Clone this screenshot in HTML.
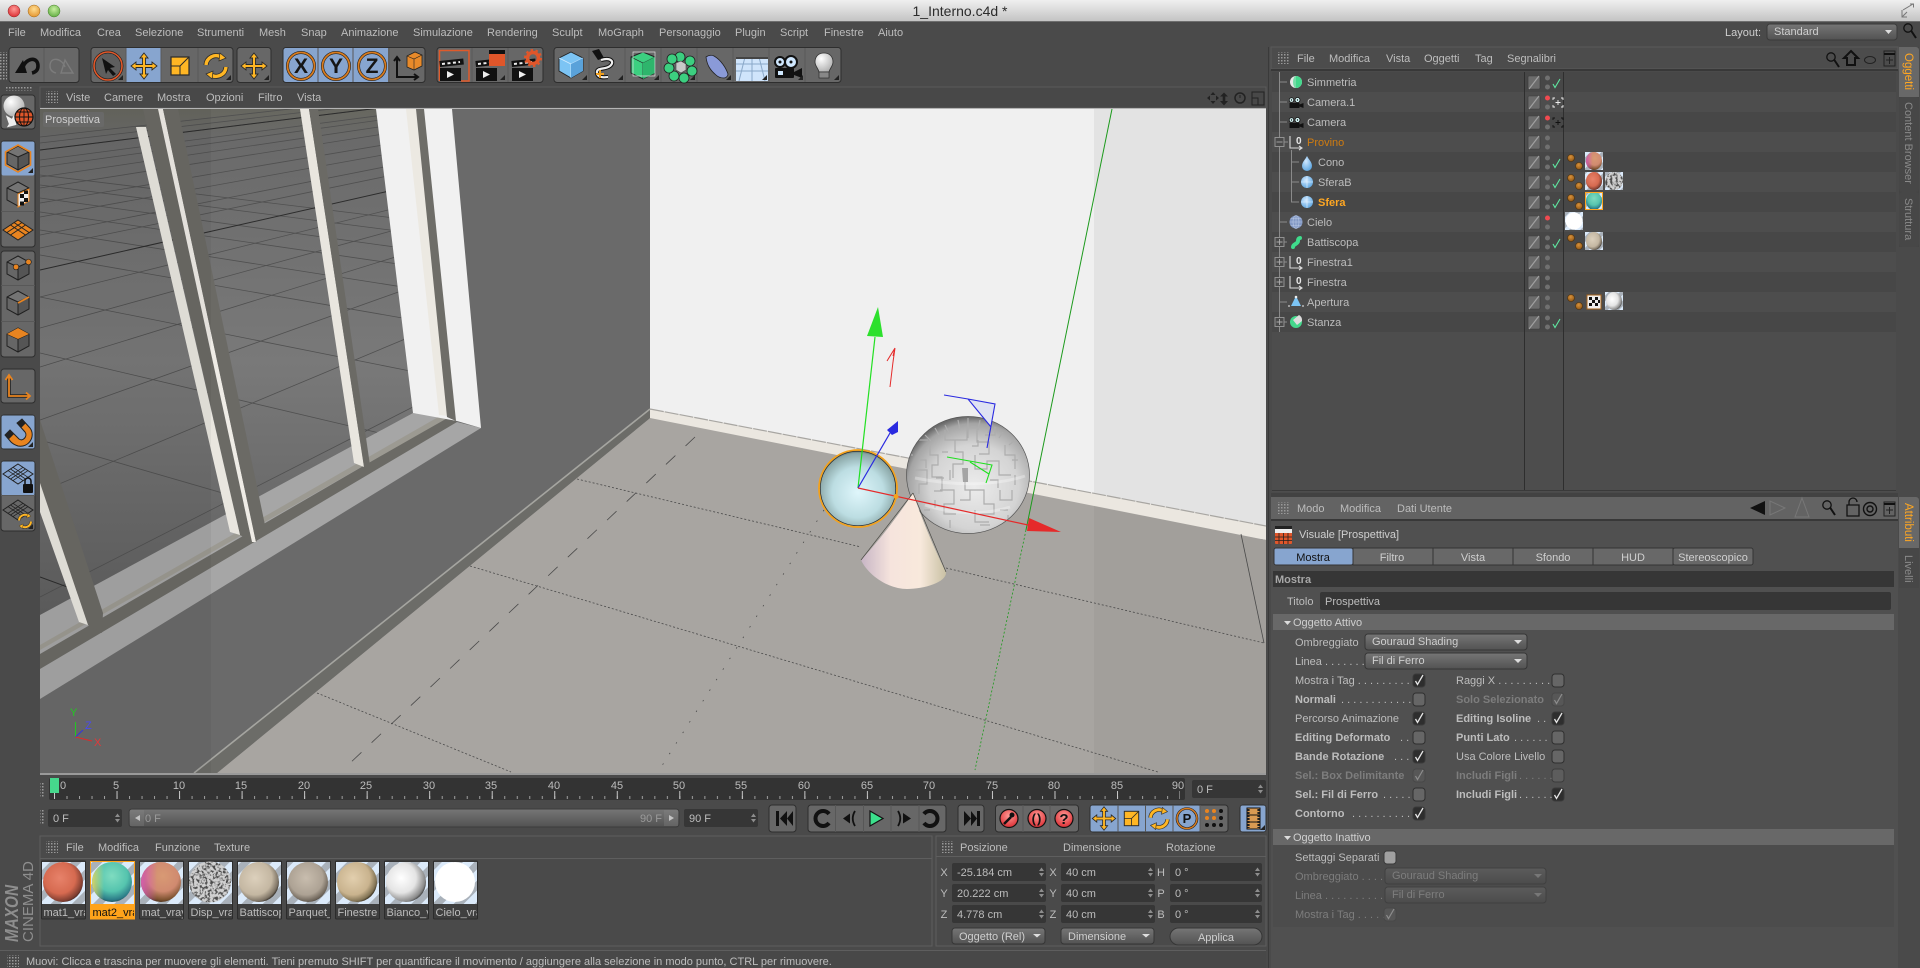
<!DOCTYPE html>
<html><head><meta charset="utf-8"><title>1_Interno.c4d</title>
<style>html,body{margin:0;padding:0;background:#4a4a4a;overflow:hidden}svg{display:block}
text{font-family:"Liberation Sans",sans-serif;font-size:11px;fill:#bdbdbd;white-space:pre}
.b{font-weight:bold}.d{fill:#7d7d7d}.h{fill:#cfcfcf}</style></head><body>
<svg xmlns="http://www.w3.org/2000/svg" width="1920" height="968" viewBox="0 0 1920 968">
<defs>
<linearGradient id="tb" x1="0" y1="0" x2="0" y2="1"><stop offset="0" stop-color="#efefef"/><stop offset="1" stop-color="#c4c4c4"/></linearGradient>
<linearGradient id="dd" x1="0" y1="0" x2="0" y2="1"><stop offset="0" stop-color="#767676"/><stop offset="1" stop-color="#525252"/></linearGradient>
<linearGradient id="ddd" x1="0" y1="0" x2="0" y2="1"><stop offset="0" stop-color="#5c5c5c"/><stop offset="1" stop-color="#4c4c4c"/></linearGradient>
<linearGradient id="gl" x1="0" y1="0" x2="0" y2="1"><stop offset="0" stop-color="#67675f"/><stop offset=".06" stop-color="#6a6a6a"/><stop offset=".5" stop-color="#797979"/><stop offset="1" stop-color="#5f5f5f"/></linearGradient>
<linearGradient id="cone" x1="0" y1="0" x2="1" y2="0"><stop offset="0" stop-color="#c7b5c5"/><stop offset=".35" stop-color="#f6e4dd"/><stop offset=".7" stop-color="#f8e9dc"/><stop offset="1" stop-color="#c9c1a4"/></linearGradient>
<radialGradient id="sa" cx=".5" cy=".55" r=".55"><stop offset="0" stop-color="#dff6fb"/><stop offset=".6" stop-color="#bcdde2"/><stop offset=".92" stop-color="#8aa6a6"/><stop offset="1" stop-color="#54625f"/></radialGradient>
<radialGradient id="sb" cx=".55" cy=".6" r=".6"><stop offset="0" stop-color="#ececec"/><stop offset=".6" stop-color="#d4d4d4"/><stop offset=".9" stop-color="#a4a4a4"/><stop offset="1" stop-color="#6a6a6a"/></radialGradient>
<radialGradient id="m1" cx=".42" cy=".4" r=".65"><stop offset="0" stop-color="#e7826a"/><stop offset=".6" stop-color="#d66a50"/><stop offset=".9" stop-color="#7d3d30"/><stop offset="1" stop-color="#2a1a18"/></radialGradient>
<radialGradient id="m2" cx=".5" cy=".35" r=".7"><stop offset="0" stop-color="#7fdcc0"/><stop offset=".55" stop-color="#55c4ae"/><stop offset=".85" stop-color="#2c7c88"/><stop offset="1" stop-color="#18303a"/></radialGradient>
<linearGradient id="m2b" x1="0" y1="0" x2="1" y2="0"><stop offset="0" stop-color="#d9d86a"/><stop offset=".3" stop-color="#d9d86a" stop-opacity="0"/></linearGradient>
<radialGradient id="m3" cx=".55" cy=".35" r=".7"><stop offset="0" stop-color="#d89a74"/><stop offset=".55" stop-color="#d08a70"/><stop offset=".85" stop-color="#7d5230"/><stop offset="1" stop-color="#2a1e14"/></radialGradient>
<linearGradient id="m3b" x1="0" y1="0" x2="1" y2="0"><stop offset="0" stop-color="#d860b0"/><stop offset=".4" stop-color="#d860b0" stop-opacity="0"/></linearGradient>
<radialGradient id="m5" cx=".4" cy=".4" r=".65"><stop offset="0" stop-color="#dcd0bc"/><stop offset=".65" stop-color="#c4b7a2"/><stop offset=".9" stop-color="#7c7264"/><stop offset="1" stop-color="#231f1a"/></radialGradient>
<radialGradient id="m6" cx=".45" cy=".4" r=".65"><stop offset="0" stop-color="#c8bdae"/><stop offset=".65" stop-color="#ada294"/><stop offset=".9" stop-color="#6c6358"/><stop offset="1" stop-color="#211d18"/></radialGradient>
<radialGradient id="m7" cx=".4" cy=".4" r=".65"><stop offset="0" stop-color="#e2cfae"/><stop offset=".65" stop-color="#c9b38e"/><stop offset=".9" stop-color="#807254"/><stop offset="1" stop-color="#251f14"/></radialGradient>
<radialGradient id="m8" cx=".38" cy=".4" r=".68"><stop offset="0" stop-color="#fff"/><stop offset=".55" stop-color="#e4e4e4"/><stop offset=".88" stop-color="#888"/><stop offset="1" stop-color="#1e1e1e"/></radialGradient>
<radialGradient id="bl" cx=".4" cy=".35" r=".7"><stop offset="0" stop-color="#d0e8ff"/><stop offset="1" stop-color="#5ea6e0"/></radialGradient>
<radialGradient id="wh" cx=".35" cy=".3" r=".8"><stop offset="0" stop-color="#fff"/><stop offset="1" stop-color="#aaa"/></radialGradient>
<radialGradient id="red" cx=".5" cy=".35" r=".7"><stop offset="0" stop-color="#ff9a96"/><stop offset="1" stop-color="#d9262c"/></radialGradient>
<radialGradient id="org" cx=".5" cy=".35" r=".7"><stop offset="0" stop-color="#ffdd90"/><stop offset="1" stop-color="#e2902a"/></radialGradient>
<radialGradient id="brn" cx=".45" cy=".35" r=".7"><stop offset="0" stop-color="#d8923c"/><stop offset="1" stop-color="#8a5212"/></radialGradient>
<radialGradient id="grn" cx=".5" cy=".35" r=".7"><stop offset="0" stop-color="#c8f0a0"/><stop offset="1" stop-color="#5aa83c"/></radialGradient>
<pattern id="dots" width="3" height="3" patternUnits="userSpaceOnUse"><rect width="1.5" height="1.5" fill="#9a9a9a"/></pattern>
<pattern id="stripe" width="15" height="15" patternUnits="userSpaceOnUse" patternTransform="rotate(45)"><rect width="15" height="15" fill="#dbeafa"/><rect width="7" height="15" fill="#a9b1ba"/></pattern>
<pattern id="stripeS" width="8" height="8" patternUnits="userSpaceOnUse" patternTransform="rotate(45)"><rect width="8" height="8" fill="#dbeafa"/><rect width="4" height="8" fill="#a9b1ba"/></pattern>
<pattern id="tk" x="54" y="0" width="12.507" height="10" patternUnits="userSpaceOnUse"><rect width="1" height="10" fill="#a0a0a0"/></pattern>
<pattern id="tM" x="54" y="0" width="62.53" height="10" patternUnits="userSpaceOnUse"><rect width="1" height="10" fill="#c8c8c8"/></pattern>
<filter id="noise" x="0" y="0" width="100%" height="100%" color-interpolation-filters="sRGB"><feTurbulence type="fractalNoise" baseFrequency=".38" numOctaves="2" seed="4"/><feColorMatrix values="0 0 0 0 .3 0 0 0 0 .3 0 0 0 0 .3 5 0 0 0 -2.300"/></filter>
<clipPath id="glass"><path d="M40 109H376L413 413 40 615Z"/></clipPath>
<clipPath id="sbc"><ellipse cx="968" cy="475" rx="61" ry="58"/></clipPath>
<clipPath id="dc1"><ellipse cx="210" cy="882" rx="21" ry="20.500"/></clipPath>
<clipPath id="dc2"><ellipse cx="1614" cy="181" rx="9" ry="9"/></clipPath>
<g id="move"><path d="M0-13L4-8H1.5V-1.5H8V-4L13 0 8 4V1.5H1.5V8H4L0 13-4 8H-1.5V1.5H-8V4L-13 0-8-4V-1.5H-1.5V-8H-4Z" fill="#ffb624" stroke="#2a2a2a" stroke-width=".9"/></g>
<g id="rot"><g fill="none" stroke-linecap="butt"><path d="M-10-1A10 10 0 0 1 5-9M10 1A10 10 0 0 1-5 9" stroke="#2a2a2a" stroke-width="5"/><path d="M-10-1A10 10 0 0 1 5-9M10 1A10 10 0 0 1-5 9" stroke="#ffb624" stroke-width="3.4"/></g><path d="M4-13L10-8 3-5ZM-4 13L-10 8-3 5Z" fill="#ffb624" stroke="#2a2a2a" stroke-width=".7"/></g>
<g id="scale"><rect x="-9" y="-9" width="18" height="18" fill="#ffb624" stroke="#2a2a2a" stroke-width="1.2"/><path d="M-9 0H0V9M0 0L9-9" fill="none" stroke="#2a2a2a" stroke-width="1"/></g>
<path id="tri" d="M0 0H-5L0-5Z" fill="#222"/>
<g id="gridd" fill="none"><path d="M0-10L15 0 0 10-15 0Z" stroke="#222" stroke-width="1"/><path d="M-10-3.4L5 6.6M-5-6.7L10 3.3M10-3.4L-5 6.6M5-6.7L-10 3.3M-7.5-5L7.5 5M7.5-5L-7.5 5" stroke="#222" stroke-width=".8"/></g>
<g id="cube"><path d="M0-12L11-6V6L0 12-11 6V-6Z" fill="#666"/><path d="M0-1L11-6V6L0 12Z" fill="#555"/><path d="M0-12L11-6 0-1-11-6Z" fill="#747474"/><path d="M0-12L11-6V6L0 12-11 6V-6ZM0-1L11-6M0-1L-11-6M0-1V12" fill="none" stroke="#202020" stroke-width="1"/></g>
<g id="clap"><rect x="0" y="8" width="21" height="13" fill="#111"/><rect x="0" y="1" width="24" height="6" fill="#111" transform="rotate(-6 0 7)"/><path d="M2 4l18-2" stroke="#eee" stroke-width="2" stroke-dasharray="3 2.5"/><path d="M7 11l7 3.5-7 3.5Z" fill="#eee"/></g>
<g id="sl"><rect x="0" y="0" width="12" height="13" rx="1" fill="#6c6c6c" stroke="#3a3a3a" stroke-width=".6"/><path d="M1 13L11 0" stroke="#a0a0a0" stroke-width="1.2"/></g>
<circle id="dd1" r="2.500" fill="#707070"/>
<path id="chk" d="M0 0l2 3.5L7-5" fill="none" stroke="#5fe6a0" stroke-width="1.1"/>
<g id="tag"><circle cx="-4" cy="-4" r="3.500" fill="url(#brn)" stroke="#4e2f0a" stroke-width=".6"/><circle cx="4" cy="4" r="3.500" fill="url(#brn)" stroke="#4e2f0a" stroke-width=".6"/></g>
<g id="cb0"><rect x="0" y="-6" width="12" height="13" rx="3" fill="#666" stroke="#2f2f2f"/></g>
<g id="cb1"><rect x="0" y="-6" width="12" height="13" rx="3" fill="#2e2e2e" stroke="#3a3a3a"/><path d="M2.5 1l2 3.5L10-5" fill="none" stroke="#e6e6e6" stroke-width="1.3"/></g>
<g id="cbd"><rect x="0" y="-6" width="12" height="13" rx="3" fill="#575757" stroke="#484848"/><path d="M2.5 1l2 3.5L10-5" fill="none" stroke="#8d8d8d" stroke-width="1.2"/></g>
<path id="spin" d="M0 -1L2.5-4.5 5-1ZM0 1L2.5 4.5 5 1Z" fill="#8e8e8e"/>
<path id="null" d="M0-6V6H11M9 4l3 2-3 2" fill="none" stroke="#d8d8d8" stroke-width="1.1"/>
<g id="plus"><rect x="-4.5" y="-4.5" width="9" height="9" fill="#4a4a4a" stroke="#999" stroke-width=".9"/><path d="M-3 0H3M0-3V3" stroke="#aaa" stroke-width=".9"/></g>
<g id="minus"><rect x="-4.5" y="-4.5" width="9" height="9" fill="#4a4a4a" stroke="#999" stroke-width=".9"/><path d="M-3 0H3" stroke="#aaa" stroke-width=".9"/></g>
<g id="ms"><circle cx="-2" cy="-3" r="4.2" fill="none" stroke="#111" stroke-width="1.3"/><path d="M1-.5L6 7" stroke="#111" stroke-width="2"/></g>
<g id="camS"><circle cx="-9" cy="-6" r="4.500" fill="#dff" stroke="#111" stroke-width="1.600"/><circle cx="3" cy="-6" r="5" fill="#dff" stroke="#111" stroke-width="1.600"/><circle cx="-9" cy="-6" r="1.400" fill="#111"/><circle cx="3" cy="-6" r="1.400" fill="#111"/><rect x="-13" y="0" width="20" height="10" fill="#111"/><path d="M7 3l8-3v10l-8-3Z" fill="#111"/></g>
</defs>

<rect width="1920" height="968" fill="#4a4a4a"/>
<!-- title -->
<rect width="1920" height="21" fill="url(#tb)"/><rect y="21" width="1920" height="1" fill="#6e6e6e"/>
<circle cx="14" cy="11" r="6" fill="url(#red)" stroke="#8e2c2c" stroke-width=".5"/><circle cx="34" cy="11" r="6" fill="url(#org)" stroke="#a06a20" stroke-width=".5"/><circle cx="54" cy="11" r="6" fill="url(#grn)" stroke="#4a8030" stroke-width=".5"/>
<text x="960" y="16" text-anchor="middle" style="font-size:14px;fill:#2c2c2c">1_Interno.c4d *</text>
<path d="M1903 10l10-6m-3-0h3.5v3.5M1902 10v7h5M1902 17l5-5" fill="none" stroke="#777" stroke-width="1"/>
<!-- menu -->
<g>
<text x="8" y="36">File</text><text x="40" y="36">Modifica</text><text x="97" y="36">Crea</text><text x="135" y="36">Selezione</text><text x="197" y="36">Strumenti</text><text x="259" y="36">Mesh</text><text x="301" y="36">Snap</text><text x="341" y="36">Animazione</text><text x="413" y="36">Simulazione</text><text x="487" y="36">Rendering</text><text x="552" y="36">Sculpt</text><text x="598" y="36">MoGraph</text><text x="659" y="36">Personaggio</text><text x="735" y="36">Plugin</text><text x="780" y="36">Script</text><text x="824" y="36">Finestre</text><text x="878" y="36">Aiuto</text>
<text x="1725" y="36" class="h">Layout:</text>
<rect x="1767" y="24" width="130" height="16" rx="3" fill="url(#dd)" stroke="#3a3a3a"/><text x="1774" y="35" class="h">Standard</text><path d="M1885 30h7l-3.500 4Z" fill="#ddd"/>
<use href="#ms" x="1910" y="36" transform="translate(0 -5)"/>
</g>
<!-- toolbar grip -->
<rect x="0" y="52" width="7" height="28" fill="url(#dots)"/>
<!-- toolbar groups -->
<g stroke="#2e2e2e" fill="#676767">
<rect x="9" y="47.500" width="70" height="35" rx="3"/><rect x="91" y="47.500" width="142" height="35" rx="3"/><rect x="237" y="47.500" width="34" height="35" rx="3"/><rect x="283" y="47.500" width="142" height="35" rx="3"/><rect x="437" y="47.500" width="106" height="35" rx="3"/><rect x="554" y="47.500" width="287" height="35" rx="3"/>
</g>
<g fill="#87a5cf"><rect x="126" y="48" width="35" height="34"/><path d="M286 48h102v34h-102a2.500 2.500 0 0 1-2.500-2.500v-29a2.500 2.500 0 0 1 2.500-2.500Z"/></g>
<path d="M44 48v34M126 48v34M161 48v34M198 48v34M318 48v34M353 48v34M389 48v34M472 48v34M508 48v34M589 48v34M625 48v34M661 48v34M697 48v34M733 48v34M769 48v34M805 48v34" stroke="#585858" fill="none"/>
<path d="M15 73L27 73 23 60Z" fill="#111"/><path d="M23 67C26 58 38 56 38 66 38 70 36 72 32 73" fill="none" stroke="#111" stroke-width="3.600"/>
<path d="M73 73L61 73 65 60ZM65 67C62 58 50 56 50 66 50 70 52 72 56 73" fill="none" stroke="#7c7c7c" stroke-width="1.400"/>
<!-- cursor -->
<circle cx="108" cy="66" r="14" fill="#5e5e5e" stroke="#1c1c1c" stroke-width="2.800"/><circle cx="108" cy="66" r="14" fill="none" stroke="#e2582a" stroke-width="1.600"/>
<path d="M102 58L115 67 110 68 116 74 113 76 108 70 106 74Z" fill="#111"/>
<use href="#move" x="144" y="66"/><use href="#scale" x="180" y="66"/><use href="#rot" x="216" y="66"/><use href="#move" x="254" y="66"/>
<use href="#tri" x="123" y="80"/><use href="#tri" x="231" y="80"/><use href="#tri" x="269" y="80"/>
<g fill="none"><circle cx="301" cy="66" r="13.500" stroke="#202020" stroke-width="3"/><circle cx="301" cy="66" r="13.500" stroke="#d97c1e" stroke-width="1.800"/><circle cx="336" cy="66" r="13.500" stroke="#202020" stroke-width="3"/><circle cx="336" cy="66" r="13.500" stroke="#d97c1e" stroke-width="1.800"/><circle cx="372" cy="66" r="13.500" stroke="#202020" stroke-width="3"/><circle cx="372" cy="66" r="13.500" stroke="#d97c1e" stroke-width="1.800"/></g>
<text x="301" y="73" text-anchor="middle" class="b" style="font-size:21px;fill:#161616">X</text><text x="336" y="73" text-anchor="middle" class="b" style="font-size:21px;fill:#161616">Y</text><text x="372" y="73" text-anchor="middle" class="b" style="font-size:21px;fill:#161616">Z</text>
<path d="M397 58V77H417M394 61l3-4 3 4M414 74l4 3-4 3" fill="none" stroke="#111" stroke-width="2"/>
<path d="M407 56l8-4 7 3v11l-8 4-7-3Z" fill="#e88a2a" stroke="#222" stroke-width=".8"/><path d="M407 56l7 3 8-4M414 59v11" fill="none" stroke="#222" stroke-width=".6"/>
<!-- render -->
<path d="M439.500 81V50.500H469V81H461" fill="none" stroke="#e05a2a" stroke-width="1.500"/><use href="#clap" x="440" y="60"/>
<use href="#clap" x="476" y="60"/><rect x="489" y="50" width="16" height="16" fill="#e0562a"/><rect x="489" y="50" width="16" height="4" fill="#111"/><use href="#tri" x="505" y="80"/>
<use href="#clap" x="512" y="60"/><circle cx="533" cy="58" r="5.500" fill="none" stroke="#e0562a" stroke-width="3.500"/><circle cx="533" cy="58" r="8" fill="none" stroke="#e0562a" stroke-width="2" stroke-dasharray="2.500 2.500"/>
<!-- objects -->
<path d="M571 52l12 6v13l-12 7-12-7V58Z" fill="#7cc4f4" stroke="#222" stroke-width=".9"/><path d="M559 58l12 6 12-6M571 64v14" fill="none" stroke="#cfeaff" stroke-width=".8"/><path d="M571 64l12-6v13l-12 7Z" fill="#5aa2da"/><use href="#tri" x="587" y="80"/>
<path d="M592 51l7-2 5 9-6 2Z" fill="#111"/><path d="M601 60c10-3 14 2 9 6s-14 1-13 7 10 4 11 4" fill="none" stroke="#111" stroke-width="4.200"/><path d="M601 60c10-3 14 2 9 6s-14 1-13 7 10 4 11 4" fill="none" stroke="#eee" stroke-width="2.200"/><path d="M596 74h8M600 70v8" stroke="#f0a020" stroke-width="2"/><use href="#tri" x="623" y="80"/>
<path d="M643 52l12 5v16l-12 6-12-6V57Z" fill="#3ccf80" stroke="#222"/><path d="M631 57l12 6 12-6M643 63v16" fill="none" stroke="#222" stroke-width=".6"/><path d="M643 63l12-6v16l-12 6Z" fill="#2eb56c"/><path d="M633 52h22v24h-22Z" fill="none" stroke="#ddd" stroke-width=".7"/><use href="#tri" x="659" y="80"/>
<g fill="#3ccf80" stroke="#222" stroke-width=".8"><circle cx="680" cy="57" r="5"/><circle cx="690" cy="61" r="5"/><circle cx="692" cy="71" r="5"/><circle cx="684" cy="78" r="5"/><circle cx="674" cy="76" r="5"/><circle cx="669" cy="68" r="5"/><circle cx="672" cy="59" r="5"/></g><path d="M676 63l5-2 5 3v6l-5 3-5-3Z" fill="#c8c8c8" stroke="#444" stroke-width=".6"/><use href="#tri" x="695" y="80"/>
<path d="M706 57c3-2 6-2 8-1 7 4 12 12 14 18 0 2-2 4-4 4-3 0-6-1-8-3-6-5-9-10-10-18Z" fill="#8a9ad8" stroke="#222" stroke-width=".8"/><use href="#tri" x="731" y="80"/>
<rect x="736" y="57" width="32" height="24" fill="#cfe4fb"/><path d="M736 64h32M736 71h32M752 57v24M745 57l-6 24M759 57l6 24" stroke="#8aa8c8" fill="none"/><rect x="736" y="57" width="32" height="2" fill="#444"/><use href="#tri" x="767" y="80"/>
<g><circle cx="780" cy="62" r="5" fill="#d0e8ff" stroke="#111" stroke-width="2"/><circle cx="791" cy="62" r="6" fill="#d0e8ff" stroke="#111" stroke-width="2"/><circle cx="780" cy="62" r="1.500" fill="#111"/><circle cx="791" cy="62" r="1.500" fill="#111"/><rect x="775" y="68" width="19" height="10" rx="1" fill="#111"/><rect x="778" y="71" width="5" height="4" fill="#d0e8ff"/><path d="M794 72l8-4v10l-8-3Z" fill="#111"/></g><use href="#tri" x="803" y="80"/>
<path d="M824 53c6 0 9 4 9 9 0 4-3 6-4 10h-10c-1-4-4-6-4-10 0-5 3-9 9-9Z" fill="url(#wh)" stroke="#333" stroke-width=".8"/><rect x="819" y="72" width="10" height="6" fill="#888" stroke="#222" stroke-width=".6"/><use href="#tri" x="839" y="80"/>

<!-- left toolbar -->
<rect x="6" y="87" width="26" height="3.500" fill="url(#dots)"/>
<g stroke="#2e2e2e" fill="#676767"><rect x="1" y="95" width="34" height="34" rx="3"/><rect x="1" y="141" width="34" height="106" rx="3"/><rect x="1" y="251" width="34" height="106" rx="3"/><rect x="1" y="369" width="34" height="34" rx="3"/><rect x="1" y="415" width="34" height="34" rx="3"/><rect x="1" y="461" width="34" height="70" rx="3"/></g>
<g fill="#87a5cf"><rect x="1.500" y="141.500" width="33" height="34" rx="2"/><rect x="1.500" y="415.500" width="33" height="33" rx="2"/><rect x="1.500" y="461.500" width="33" height="34" rx="2"/></g>
<path d="M1 211.500h34M1 285.500h34M1 321.500h34M1 495.500h34" stroke="#585858"/>
<!-- globe -->
<circle cx="14" cy="106" r="10.500" fill="url(#wh)"/><path d="M4 118l7 0 0-4 7 7-7 7 0-4Z" fill="#eee" transform="rotate(30 10 120)"/><circle cx="24" cy="117" r="9" fill="#e0562a" stroke="#111" stroke-width="1.200"/><path d="M15 117h18M24 108v18M17 112h14M17 122h14" stroke="#111" stroke-width=".9"/><ellipse cx="24" cy="117" rx="4.500" ry="9" fill="none" stroke="#111" stroke-width=".9"/>
<use href="#cube" x="18" y="158"/><path d="M18 145l12.500 7v13L18 172 5.500 165v-13Z" fill="none" stroke="#e88420" stroke-width="1.600"/><use href="#tri" x="33" y="173"/>
<use href="#cube" x="18" y="194"/><path d="M18 194l11-5v12l-11 6Z" fill="#eee" stroke="#e88420"/><path d="M20 194h4v4h-4ZM24 198h4v4h-4ZM24 190.500h4v3.500h-4ZM20 201.500h4v4h-4Z" fill="#111"/>
<path d="M18 220l15 10-15 10-15-10Z" fill="#e88420" stroke="#222"/><path d="M10.500 225l15 10M14 222.500l15 10M25.500 225l-15 10M22 222.500l-15 10" stroke="#222" fill="none"/>
<use href="#cube" x="18" y="268"/><circle cx="28.500" cy="262" r="2.800" fill="#e88420" stroke="#222" stroke-width=".7"/><circle cx="16" cy="267" r="2.800" fill="#e88420" stroke="#222" stroke-width=".7"/>
<use href="#cube" x="18" y="303"/><path d="M18 309l11-6" transform="translate(0 -6)" stroke="#e88420" stroke-width="1.800"/>
<use href="#cube" x="18" y="340"/><path d="M18 328l11 6-11 5-11-5Z" fill="#e88420"/>
<path d="M9 376v20h20" fill="none" stroke="#222" stroke-width="3.600"/><path d="M9 376v20h20M5.500 380l3.500-5 3.500 5M26 392.500l4 3.500-4 3.500" fill="none" stroke="#e88420" stroke-width="1.800"/>
<path d="M10 430l9 9c4 3 9-3 6-7l-8-9 5-4 8 9c6 8-1 20-12 18-3-1-5-2-7-4l-6-7Z" fill="#e88420" stroke="#222"/><path d="M5 435l5-5 4 4-5 5ZM17 423l5-4 4 4-5 5Z" fill="#222"/><use href="#tri" x="33" y="447"/>
<use href="#gridd" x="18" y="474"/><rect x="23" y="484" width="10" height="9" rx="1" fill="#111"/><path d="M25 484v-3a3 3 0 0 1 6 0v3" fill="none" stroke="#111" stroke-width="1.500"/>
<use href="#gridd" x="18" y="510"/><g transform="translate(25 521) scale(.6)"><use href="#rot"/></g><use href="#tri" x="33" y="529"/>

<!-- viewport header -->
<rect x="40" y="87" width="1226" height="21" fill="#484848" stroke="#5a5a5a"/>
<rect x="46" y="91" width="12" height="12" fill="url(#dots)"/>
<text x="66" y="101">Viste</text><text x="104" y="101">Camere</text><text x="157" y="101">Mostra</text><text x="206" y="101">Opzioni</text><text x="258" y="101">Filtro</text><text x="297" y="101">Vista</text>
<path d="M1207 98l3-2.500v5ZM1219 98l-3-2.500v5ZM1213 92l-2.500 3h5ZM1213 104l-2.500-3h5Z" fill="#222"/><path d="M1224 92.500l-4 4h2.700v4.500h-2.700l4 4.500 4-4.500h-2.700v-4.500h2.700Z" fill="#222"/><circle cx="1240" cy="98" r="5" fill="none" stroke="#222" stroke-width="1.500"/><path d="M1240 95v3" stroke="#222"/><path d="M1252 92h12v13h-12Zm0 6h6v7" fill="none" stroke="#222"/>
<rect x="40" y="108" width="1226" height="1" fill="#b4b4b4"/>

<!-- viewport art -->
<svg x="0" y="0" width="1920" height="968" viewBox="0 0 1920 968">
<rect x="40" y="109" width="1226" height="664" fill="#6a6a6a"/>
<rect x="650" y="109" width="616" height="430" fill="#f0f0f0"/><rect x="1094" y="109" width="172" height="430" fill="#e3e3e3"/>
<path d="M650 409L1266 526V540L650 419Z" fill="#ebe7e0"/><path d="M650 409L1266 526" stroke="#a8a6a2" stroke-width="1.200" stroke-dasharray="14 1"/>
<path d="M650 418L1266 540V773H217Z" fill="#a8a5a1"/><path d="M1094 505.500L1266 540V773H1094Z" fill="#000" opacity=".035"/>
<path d="M650 408V418L217 773H194Z" fill="#6c6c68"/><path d="M650 409L194 773" stroke="#a5a5a0" stroke-width="1.600"/>
<!-- glass -->
<path d="M40 109H376L413 413 40 615Z" fill="url(#gl)"/>
<g clip-path="url(#glass)" fill="none" stroke="#505050" stroke-width=".8">
<path d="M40 137L460 90M40 143L460 94M40 150L460 98M40 160L460 105M40 167L460 109M40 177L460 115M40 188L460 122M40 203L460 132M40 217L460 141M40 235L460 152M40 248L460 161M40 297L460 192M40 328L460 212M40 367L460 237M40 420L460 270M40 492L460 316M40 597L460 383"/>
<path d="M40 175L460 226M40 185L460 239M40 198L460 256M40 212L460 273M40 230L460 296M40 255L460 328M40 297L460 381M40 353L460 452M40 440L460 562"/>
<path d="M40 150L460 98M40 270L460 175M40 577L130 610" stroke="#2c2c2c" stroke-width="1"/>
</g>
<!-- sill -->
<path d="M413 413L450 417 40 655V615Z" fill="#a6a6a6"/>
<path d="M451 415L40 654V669L456 423 458 415Z" fill="#6b6a65"/><path d="M440 416L451 416 40 650 40 645Z" fill="#9c9a92"/>
<path d="M457 422L481 428 40 699V669Z" fill="#a6a6a6"/>
<!-- jamb -->
<path d="M376 109H452L481 428 457 421 413 413Z" fill="#f1f1f1"/>
<path d="M406 109H417L448 416 439 415Z" fill="#ece9e2"/><path d="M416 109H424L456 421 447 417Z" fill="#6e6d68"/>
<!-- mullions -->
<path d="M300 109H309L364 467 354 463Z" fill="#e9e6df"/><path d="M309 109H318L371 472 364 467Z" fill="#6b6a65"/>
<path d="M143 109H158L252 542 240 535Z" fill="#6b6a65"/><path d="M136 127H146L240 535 230 532Z" fill="#e9e6df"/><path d="M158 109H163L256 542 252 542Z" fill="#efece6"/><path d="M163 109H178L265 525 256 542Z" fill="#6b6a65"/>
<path d="M40 420L103 613 102 633 88 625 40 483Z" fill="#6b6a65"/><path d="M40 483L88 625 79 622 40 512Z" fill="#e9e6df"/>
<rect x="40" y="109" width="171" height="664" fill="#000" opacity=".045"/>
<!-- floor lines -->
<g fill="none" stroke="#4a4a4a" stroke-width=".8"><path d="M577 479L861 547M946 568L1264 643M470 566L1158 772M317 693L511 772" stroke-dasharray="2 2"/><path d="M695 437L348 765" stroke-dasharray="13 14"/><path d="M824 510L658 772" stroke-dasharray="1.500 11"/><path d="M1241 534L1264 643"/></g>
<path d="M1112 109L1026 530" stroke="#1c9a1c" stroke-width="1"/><path d="M1026 530L975 770" stroke="#1c9a1c" stroke-dasharray="2 2" stroke-width=".8" fill="none"/>
<!-- sphere B -->
<ellipse cx="968" cy="475" rx="61.500" ry="58.500" fill="url(#sb)"/>
<g clip-path="url(#sbc)" fill="none" stroke="#adadad" stroke-width="1.200">
<path d="M930 445v10h8v10h-6v12h10v14h-8M945 430v10h10v12h8v12h-10v14M955 440h12v-12h10v14h12v12h-10M975 455v14h12v-8h12v14h12M985 435h10v-8M1005 445v10h10v14M915 470h12v14h-8v10M940 490h14v14h-10v10h12M960 500h10v-10h14v14h10v10h-14M975 510v12h14M1000 490v10h12v-10M1015 475v10M930 510h-6M950 520v8M990 525h-10M905 455h8M918 440h10M1008 515v6M920 460h6v8M936 478h8M965 482v8h6M990 480h8v8M1012 460h6M948 452h-6M950 470v10M978 440v6h-6M935 500v8M1000 510h8"/>
<path d="M968 418v20M945 425l4 8M992 425l-4 8M925 435l6 6M1015 440l-6 5M958 420l2 10M980 420l-2 10M935 428l4 7M1003 432l-4 6"/>
<path d="M962 468h6v14h-5Z" fill="#a4a4a4" stroke="none"/><path d="M915 478c40 8 80 8 110-2M925 505c30 10 60 10 85 2" stroke="#fff" stroke-width="3" opacity=".3"/>
</g>
<ellipse cx="968" cy="475" rx="61.500" ry="58.500" fill="none" stroke="#555" stroke-width=".7"/>
<!-- cam blue -->
<path d="M968 399L995 404 991 427Z" fill="#dfe2f2"/><path d="M944 395L968 399 995 404 987 448M968 399L991 427" fill="none" stroke="#2a2ae0" stroke-width="1.100"/>
<path d="M947 457L992 465 986 483M970 462L989 474" fill="none" stroke="#1ee01e" stroke-width="1.100"/>
<!-- sphere A -->
<ellipse cx="858" cy="488.500" rx="39" ry="38.500" fill="url(#sa)" stroke="#f4a21c" stroke-width="1.800"/><ellipse cx="858" cy="488.500" rx="37.700" ry="37.200" fill="none" stroke="#2a2a2a" stroke-width=".7"/>
<!-- cone -->
<path d="M913 493C922 520 937 555 946 572 947 582 925 589 907 589 888 589 868 575 861 560 880 540 900 513 913 493Z" fill="url(#cone)"/><path d="M913 493L946 572M913 493L861 560" stroke="#4a4a44" stroke-width=".7"/>
<!-- axes -->
<path d="M858 488L875 337" stroke="#22e022" stroke-width="1.200"/><path d="M878 307L867 336 883 337Z" fill="#2de02d"/>
<path d="M858 488L890 433" stroke="#2a2ae0" stroke-width="1.200"/><path d="M898 421L887 430 892 435 898 432Z" fill="#2a2ae0"/>
<path d="M858 488L1028 525" stroke="#e52a2a" stroke-width="1.200"/><path d="M1029 518L1061 532 1027 531Z" fill="#e52a2a"/><circle cx="896" cy="496.500" r="2.500" fill="#f4a21c"/>
<path d="M890 387L893 362M895 348L887 361M895 348L893 362M895 348L893 356" fill="none" stroke="#e52a2a" stroke-width="1"/>
<!-- gizmo -->
<path d="M75.500 737V722" stroke="#22c822"/><path d="M75.500 737L83 730" stroke="#3434e0"/><path d="M75.500 737L92 741" stroke="#e02a2a"/>
<text x="70" y="716" style="font-size:11px;fill:#22c822">Y</text><text x="85" y="729" style="font-size:11px;fill:#4a4aee">Z</text><text x="94" y="746" style="font-size:11px;fill:#e03a3a">X</text>
<rect x="43" y="112" width="61" height="15" rx="2" fill="#6a6a6a" opacity=".85"/><text x="45" y="123" class="h">Prospettiva</text>
</svg>
<rect x="40" y="773" width="1226" height="2" fill="#9a9a9a"/>

<!-- timeline -->
<rect x="40" y="783" width="5" height="15" fill="url(#dots)"/><rect x="40" y="809" width="5" height="16" fill="url(#dots)"/>
<rect x="49" y="778" width="1136" height="22" rx="2" fill="#333"/>
<rect x="54" y="796" width="1126" height="3" fill="url(#tk)"/><rect x="54" y="791" width="1126" height="8" fill="url(#tM)"/>
<rect x="50" y="778" width="9" height="15" fill="#46d78c"/>
<g text-anchor="middle"><text x="63" y="789">0</text><text x="116" y="789">5</text><text x="179" y="789">10</text><text x="241" y="789">15</text><text x="304" y="789">20</text><text x="366" y="789">25</text><text x="429" y="789">30</text><text x="491" y="789">35</text><text x="554" y="789">40</text><text x="617" y="789">45</text><text x="679" y="789">50</text><text x="741" y="789">55</text><text x="804" y="789">60</text><text x="867" y="789">65</text><text x="929" y="789">70</text><text x="992" y="789">75</text><text x="1054" y="789">80</text><text x="1117" y="789">85</text><text x="1178" y="789">90</text></g>
<!-- fields -->
<g fill="#363636"><rect x="1192" y="780" width="74" height="18" rx="2"/><rect x="48" y="809" width="74" height="18" rx="2"/><rect x="684" y="809" width="74" height="18" rx="2"/></g>
<text x="1197" y="793">0 F</text><text x="53" y="822">0 F</text><text x="689" y="822">90 F</text>
<use href="#spin" x="1258" y="789"/><use href="#spin" x="115" y="818"/><use href="#spin" x="751" y="818"/>
<rect x="129" y="809" width="550" height="18" rx="3" fill="url(#dd)" stroke="#3c3c3c"/>
<rect x="130" y="810" width="14" height="16" fill="#8a8a8a" opacity=".3"/><rect x="664" y="810" width="14" height="16" fill="#8a8a8a" opacity=".3"/>
<path d="M135 818l5-3v6ZM674 818l-5-3v6Z" fill="#c4c4c4"/><text x="145" y="822" style="fill:#9a9a9a">0 F</text><text x="640" y="822" style="fill:#9a9a9a">90 F</text>
<!-- transport -->
<g stroke="#2e2e2e" fill="#676767"><rect x="769" y="805" width="27" height="27" rx="3"/><rect x="808" y="805" width="138" height="27" rx="3"/><rect x="958" y="805" width="26" height="27" rx="3"/><rect x="995.500" y="805" width="83" height="27" rx="3"/><rect x="1090" y="805" width="138" height="27" rx="3"/><rect x="1240" y="805" width="26" height="27" rx="3"/></g>
<g fill="#87a5cf"><rect x="1090.500" y="805.500" width="109.500" height="26" rx="2"/><rect x="1240.500" y="805.500" width="25" height="26" rx="2"/></g>
<path d="M835.500 805v27M863.500 805v27M891 805v27M919 805v27M1023 805v27M1050 805v27M1118 805v27M1145.500 805v27M1173 805v27M1200 805v27" stroke="#575757"/>
<path d="M776 811h3v15h-3ZM780 818.500l7-7.500v15ZM787 818.500l6-7.500v15Z" fill="#111"/>
<path d="M829 814a7.500 7.500 0 1 0 0 9" fill="none" stroke="#111" stroke-width="4"/>
<path d="M843 818.500l7-5v10Z" fill="#111"/><path d="M855 811c-3 5-3 10 0 15" fill="none" stroke="#111" stroke-width="1.800"/>
<path d="M870 811l13 7.500-13 7.500Z" fill="#3ce08c" stroke="#111" stroke-width="1.200"/>
<path d="M898 811c3 5 3 10 0 15" fill="none" stroke="#111" stroke-width="1.800"/><path d="M903 813l8 5.500-8 5Z" fill="#111"/>
<path d="M924 814a7.500 7.500 0 1 1 0 9" fill="none" stroke="#111" stroke-width="4"/>
<path d="M964 811l7 7.500-7 7.500ZM971 811l6 7.500-6 7.500ZM977 811h3v15h-3Z" fill="#111"/>
<g stroke="#111" stroke-width="1.200" fill="url(#red)"><circle cx="1009" cy="818.500" r="9"/><circle cx="1037" cy="818.500" r="9"/><circle cx="1064" cy="818.500" r="9"/></g>
<path d="M1004 824l7-7" stroke="#111" stroke-width="2.500"/><circle cx="1012" cy="815" r="2.500" fill="#111"/><text x="1037" y="823" text-anchor="middle" class="b" style="font-size:13px;fill:#111;letter-spacing:1px">()</text><text x="1064" y="824" text-anchor="middle" class="b" style="font-size:15px;fill:#111">?</text>
<use href="#move" transform="translate(1104 818.500) scale(.9)"/><use href="#scale" transform="translate(1131.500 818.500) scale(.8)"/><use href="#rot" transform="translate(1159 818.500) scale(.85)"/>
<circle cx="1187" cy="818.500" r="10" fill="none" stroke="#202020" stroke-width="2.600"/><circle cx="1187" cy="818.500" r="10" fill="none" stroke="#d97c1e" stroke-width="1.400"/><text x="1187" y="823" text-anchor="middle" class="b" style="font-size:13px;fill:#111">P</text>
<g fill="#e88420"><circle cx="1207" cy="811" r="2"/><circle cx="1214" cy="811" r="2"/><circle cx="1207" cy="818" r="2"/><circle cx="1214" cy="818" r="2"/></g><g fill="#111"><circle cx="1221" cy="811" r="2"/><circle cx="1221" cy="818" r="2"/><circle cx="1207" cy="825" r="2"/><circle cx="1214" cy="825" r="2"/><circle cx="1221" cy="825" r="2"/></g>
<rect x="1247" y="808" width="13" height="21" fill="#d99a52" stroke="#111"/><path d="M1247 815h13M1247 822h13" stroke="#111"/><path d="M1248.500 809v19M1258.500 809v19" stroke="#222" stroke-width="2.200" stroke-dasharray="2 1"/><use href="#tri" x="1265" y="830"/>

<!-- materials -->
<rect x="40" y="836" width="892" height="110" fill="#4a4a4a" stroke="#5e5e5e"/><rect x="40" y="858" width="892" height="1" fill="#5e5e5e"/>
<rect x="46" y="841" width="12" height="12" fill="url(#dots)"/>
<text x="66" y="851">File</text><text x="98" y="851">Modifica</text><text x="155" y="851">Funzione</text><text x="214" y="851">Texture</text>
<g id="tiles">
<g stroke="#2c2c2c" fill="#3f3f3f"><rect x="41.500" y="861" width="44" height="58" rx="1"/><rect x="90.500" y="861" width="44" height="58" rx="1"/><rect x="139.500" y="861" width="44" height="58" rx="1"/><rect x="188.500" y="861" width="44" height="58" rx="1"/><rect x="237.500" y="861" width="44" height="58" rx="1"/><rect x="286.500" y="861" width="44" height="58" rx="1"/><rect x="335.500" y="861" width="44" height="58" rx="1"/><rect x="384.500" y="861" width="44" height="58" rx="1"/><rect x="433.500" y="861" width="44" height="58" rx="1"/></g>
<g fill="url(#stripe)"><rect x="42" y="862" width="43" height="42"/><rect x="91" y="862" width="43" height="42"/><rect x="140" y="862" width="43" height="42"/><rect x="189" y="862" width="43" height="42"/><rect x="238" y="862" width="43" height="42"/><rect x="287" y="862" width="43" height="42"/><rect x="336" y="862" width="43" height="42"/><rect x="385" y="862" width="43" height="42"/><rect x="434" y="862" width="43" height="42"/></g>
<rect x="90.500" y="904" width="44" height="15" fill="#ffa31a"/><rect x="90.500" y="861.500" width="44" height="57.500" fill="none" stroke="#ffa31a"/>
<ellipse cx="63" cy="882" rx="20" ry="20" fill="url(#m1)"/>
<ellipse cx="112" cy="882" rx="20" ry="20" fill="url(#m2)"/><ellipse cx="112" cy="882" rx="20" ry="20" fill="url(#m2b)"/>
<ellipse cx="161" cy="882" rx="20" ry="20" fill="url(#m3)"/><ellipse cx="161" cy="882" rx="20" ry="20" fill="url(#m3b)"/>
<ellipse cx="210" cy="882" rx="21" ry="20.500" fill="#d0d0d0"/><g clip-path="url(#dc1)"><rect x="189" y="861" width="43" height="42" filter="url(#noise)"/></g>
<ellipse cx="259" cy="882" rx="20" ry="20" fill="url(#m5)"/>
<ellipse cx="308" cy="882" rx="20" ry="20" fill="url(#m6)"/>
<ellipse cx="357" cy="882" rx="20" ry="20" fill="url(#m7)"/>
<ellipse cx="406" cy="882" rx="20" ry="20" fill="url(#m8)"/>
<ellipse cx="455" cy="882" rx="20" ry="20" fill="#fff"/>
<svg x="42" y="904" width="43" height="15"><text x="1.500" y="12">mat1_vray</text></svg>
<svg x="91" y="904" width="43" height="15"><text x="1.500" y="12" style="fill:#111">mat2_vray</text></svg>
<svg x="140" y="904" width="43" height="15"><text x="1.500" y="12">mat_vray</text></svg>
<svg x="189" y="904" width="43" height="15"><text x="1.500" y="12">Disp_vray</text></svg>
<svg x="238" y="904" width="43" height="15"><text x="1.500" y="12">Battiscopa</text></svg>
<svg x="287" y="904" width="43" height="15"><text x="1.500" y="12">Parquet_v</text></svg>
<svg x="336" y="904" width="43" height="15"><text x="1.500" y="12">Finestre</text></svg>
<svg x="385" y="904" width="43" height="15"><text x="1.500" y="12">Bianco_vray</text></svg>
<svg x="434" y="904" width="43" height="15"><text x="1.500" y="12">Cielo_vray</text></svg>
</g>
<!-- logo -->
<text transform="translate(18 942) rotate(-90)" class="b" textLength="57" lengthAdjust="spacingAndGlyphs" style="font-size:18px;font-style:italic;fill:#8e8e8e">MAXON</text>
<text transform="translate(33 942) rotate(-90)" style="font-size:15px;fill:#8e8e8e">CINEMA 4D</text>

<!-- coords -->
<rect x="936" y="836" width="330" height="110" fill="#4a4a4a" stroke="#5e5e5e"/><rect x="936" y="856" width="330" height="1" fill="#5e5e5e"/>
<rect x="942" y="841" width="12" height="12" fill="url(#dots)"/>
<text x="960" y="851">Posizione</text><text x="1063" y="851">Dimensione</text><text x="1166" y="851">Rotazione</text>
<g fill="#363636"><rect x="952" y="863" width="94" height="18" rx="2"/><rect x="1061" y="863" width="94" height="18" rx="2"/><rect x="1170" y="863" width="92" height="18" rx="2"/><rect x="952" y="884" width="94" height="18" rx="2"/><rect x="1061" y="884" width="94" height="18" rx="2"/><rect x="1170" y="884" width="92" height="18" rx="2"/><rect x="952" y="905" width="94" height="18" rx="2"/><rect x="1061" y="905" width="94" height="18" rx="2"/><rect x="1170" y="905" width="92" height="18" rx="2"/></g>
<g text-anchor="middle"><text x="944" y="876">X</text><text x="944" y="897">Y</text><text x="944" y="918">Z</text><text x="1053" y="876">X</text><text x="1053" y="897">Y</text><text x="1053" y="918">Z</text><text x="1161" y="876">H</text><text x="1161" y="897">P</text><text x="1161" y="918">B</text></g>
<text x="957" y="876">-25.184 cm</text><text x="1066" y="876">40 cm</text><text x="1175" y="876">0 °</text><text x="957" y="897">20.222 cm</text><text x="1066" y="897">40 cm</text><text x="1175" y="897">0 °</text><text x="957" y="918">4.778 cm</text><text x="1066" y="918">40 cm</text><text x="1175" y="918">0 °</text>
<use href="#spin" x="1039" y="872"/><use href="#spin" x="1148" y="872"/><use href="#spin" x="1255" y="872"/><use href="#spin" x="1039" y="893"/><use href="#spin" x="1148" y="893"/><use href="#spin" x="1255" y="893"/><use href="#spin" x="1039" y="914"/><use href="#spin" x="1148" y="914"/><use href="#spin" x="1255" y="914"/>
<g fill="url(#dd)" stroke="#363636"><rect x="952" y="928" width="93" height="16" rx="3"/><rect x="1061" y="928" width="93" height="16" rx="3"/><rect x="1170" y="928" width="92" height="17" rx="8.500"/></g>
<text x="959" y="940" class="h">Oggetto (Rel)</text><text x="1068" y="940" class="h">Dimensione</text><text x="1216" y="941" text-anchor="middle" class="h">Applica</text>
<path d="M1033 934h8l-4 3.500ZM1142 934h8l-4 3.500Z" fill="#ddd"/>

<!-- status -->
<rect y="950" width="1266" height="18" fill="#484848"/><rect y="950" width="1266" height="1" fill="#5e5e5e"/>
<rect x="7" y="955" width="12" height="12" fill="url(#dots)"/>
<text x="26" y="965">Muovi: Clicca e trascina per muovere gli elementi. Tieni premuto SHIFT per quantificare il movimento / aggiungere alla selezione in modo punto, CTRL per rimuovere.</text>

<!-- Object manager -->
<rect x="1268" y="47" width="1" height="921" fill="#3a3a3a"/>
<rect x="1271" y="47" width="627" height="22" fill="#4c4c4c" stroke="#5a5a5a"/><rect x="1271" y="69" width="627" height="2" fill="#383838"/>
<rect x="1277" y="52" width="12" height="12" fill="url(#dots)"/>
<text x="1297" y="62">File</text><text x="1329" y="62">Modifica</text><text x="1386" y="62">Vista</text><text x="1424" y="62">Oggetti</text><text x="1475" y="62">Tag</text><text x="1507" y="62">Segnalibri</text>
<use href="#ms" x="1833" y="60"/><path d="M1851 51l7 7h-3v7h-8v-7h-3Z" fill="none" stroke="#111" stroke-width="2"/><ellipse cx="1870" cy="60" rx="5.500" ry="3.500" fill="none" stroke="#222"/><rect x="1884" y="51" width="11" height="15" fill="none" stroke="#222"/><path d="M1884 54h11" stroke="#111" stroke-width="2"/><path d="M1886 60h7M1889.500 57v7" stroke="#222"/>
<g fill="#4d4d4d"><rect x="1272" y="72" width="624" height="420"/></g>
<g fill="#474747"><rect x="1272" y="72" width="624" height="20"/><rect x="1272" y="112" width="624" height="20"/><rect x="1272" y="152" width="624" height="20"/><rect x="1272" y="192" width="624" height="20"/><rect x="1272" y="232" width="624" height="20"/><rect x="1272" y="272" width="624" height="20"/><rect x="1272" y="312" width="624" height="20"/></g>
<path d="M1524.500 72v418M1563.500 72v418" stroke="#2e2e2e"/><path d="M1272 490.500h624" stroke="#3a3a3a"/>
<!-- tree lines -->
<path d="M1279.500 72v60M1279 82h8M1279 102h8M1279 122h8M1279.500 132v140M1279 222h8M1279 242h8M1279 262h8M1279.500 272v60M1279 302h8M1279 322h8M1291.500 150v52M1291 162h8M1291 182h8M1291 202h8M1279 142h9" stroke="#8a8a8a" fill="none"/>
<use href="#minus" x="1279.500" y="142"/><use href="#plus" x="1279.500" y="242"/><use href="#plus" x="1279.500" y="262"/><use href="#plus" x="1279.500" y="282"/><use href="#plus" x="1279.500" y="322"/>
<!-- icons -->
<circle cx="1296" cy="82" r="6" fill="#e8e8e8"/><path d="M1296 76a6 6 0 0 1 0 12Z" fill="#44d88c"/><path d="M1296 76a3 6 0 0 0 0 12Z" fill="#44d88c" opacity=".7"/>
<use href="#camS" transform="translate(1296 103) scale(.5)"/><use href="#camS" transform="translate(1296 123) scale(.5)"/>
<use href="#null" x="1290" y="142"/><text x="1296" y="144" class="b" style="font-size:10px;fill:#e8e8e8">0</text>
<use href="#null" x="1290" y="262"/><text x="1296" y="264" class="b" style="font-size:10px;fill:#e8e8e8">0</text>
<use href="#null" x="1290" y="282"/><text x="1296" y="284" class="b" style="font-size:10px;fill:#e8e8e8">0</text>
<path d="M1307 156c2 4 5 6 5 10a5 5 0 0 1-10 0c0-4 3-6 5-10Z" fill="url(#bl)"/>
<circle cx="1307" cy="182" r="6" fill="url(#bl)"/><path d="M1301 182h12M1307 176v12" stroke="#e8f4ff" stroke-width=".6"/>
<circle cx="1307" cy="202" r="6" fill="url(#bl)"/><path d="M1301 202h12M1307 196v12" stroke="#e8f4ff" stroke-width=".6"/>
<circle cx="1296" cy="222" r="6.500" fill="#8399c4"/><path d="M1289.500 222h13M1296 215.500v13M1290.500 218.500h11M1290.500 225.500h11" stroke="#b8c8e4" stroke-width=".6"/><ellipse cx="1296" cy="222" rx="3" ry="6.500" fill="none" stroke="#b8c8e4" stroke-width=".6"/>
<path d="M1293 247c0-3 5-3 5-6s2-3 2-3" fill="none" stroke="#3fdc8c" stroke-width="4" stroke-linecap="round"/>
<path d="M1296 296l5 10h-10Z" fill="#7cc4f4"/><circle cx="1296" cy="297" r="1.300" fill="#eee"/><path d="M1290 306h-2M1302 306h2" stroke="#eee"/>
<circle cx="1296" cy="322" r="6" fill="#44d88c"/><path d="M1293 320l6-5a6 6 0 0 1 3 6l-5 4Z" fill="#ddd"/>
<text x="1307" y="86">Simmetria</text><text x="1307" y="106">Camera.1</text><text x="1307" y="126">Camera</text><text x="1307" y="146" style="fill:#d07c10">Provino</text><text x="1318" y="166">Cono</text><text x="1318" y="186">SferaB</text><text x="1318" y="206" class="b" style="fill:#ffa722">Sfera</text><text x="1307" y="226">Cielo</text><text x="1307" y="246">Battiscopa</text><text x="1307" y="266">Finestra1</text><text x="1307" y="286">Finestra</text><text x="1307" y="306">Apertura</text><text x="1307" y="326">Stanza</text>
<!-- col -->
<use href="#sl" x="1528" y="76"/><use href="#sl" x="1528" y="96"/><use href="#sl" x="1528" y="116"/><use href="#sl" x="1528" y="136"/><use href="#sl" x="1528" y="156"/><use href="#sl" x="1528" y="176"/><use href="#sl" x="1528" y="196"/><use href="#sl" x="1528" y="216"/><use href="#sl" x="1528" y="236"/><use href="#sl" x="1528" y="256"/><use href="#sl" x="1528" y="276"/><use href="#sl" x="1528" y="296"/><use href="#sl" x="1528" y="316"/>
<g id="dotsc"><use href="#dd1" x="1547.500" y="78"/><use href="#dd1" x="1547.500" y="87"/><use href="#dd1" x="1547.500" y="107"/><use href="#dd1" x="1547.500" y="127"/><use href="#dd1" x="1547.500" y="138"/><use href="#dd1" x="1547.500" y="147"/><use href="#dd1" x="1547.500" y="158"/><use href="#dd1" x="1547.500" y="167"/><use href="#dd1" x="1547.500" y="178"/><use href="#dd1" x="1547.500" y="187"/><use href="#dd1" x="1547.500" y="198"/><use href="#dd1" x="1547.500" y="207"/><use href="#dd1" x="1547.500" y="227"/><use href="#dd1" x="1547.500" y="238"/><use href="#dd1" x="1547.500" y="247"/><use href="#dd1" x="1547.500" y="258"/><use href="#dd1" x="1547.500" y="267"/><use href="#dd1" x="1547.500" y="278"/><use href="#dd1" x="1547.500" y="287"/><use href="#dd1" x="1547.500" y="298"/><use href="#dd1" x="1547.500" y="307"/><use href="#dd1" x="1547.500" y="318"/><use href="#dd1" x="1547.500" y="327"/></g>
<g fill="#f04a50"><circle cx="1547.500" cy="98" r="2.500"/><circle cx="1547.500" cy="118" r="2.500"/><circle cx="1547.500" cy="218" r="2.500"/></g>
<use href="#chk" x="1553" y="84"/><use href="#chk" x="1553" y="164"/><use href="#chk" x="1553" y="184"/><use href="#chk" x="1553" y="204"/><use href="#chk" x="1553" y="244"/><use href="#chk" x="1553" y="324"/>
<path d="M1553 100v-2h2M1561 98h2v2M1553 105v2h2M1561 107h2v-2M1558 100v5M1555.500 102.500h5" fill="none" stroke="#eee" stroke-width=".9"/><path d="M1553 120v-2h2M1561 118h2v2M1553 125v2h2M1561 127h2v-2M1558 120v5M1555.500 122.500h5" fill="none" stroke="#111" stroke-width=".9"/>
<use href="#tag" x="1575" y="162"/><use href="#tag" x="1575" y="182"/><use href="#tag" x="1575" y="202"/><use href="#tag" x="1575" y="242"/><use href="#tag" x="1575" y="302"/>
<g fill="url(#stripeS)"><rect x="1585" y="152" width="18" height="18"/><rect x="1585" y="172" width="18" height="18"/><rect x="1605" y="172" width="18" height="18"/><rect x="1585" y="192" width="18" height="18"/><rect x="1565" y="212" width="18" height="18"/><rect x="1585" y="232" width="18" height="18"/><rect x="1605" y="292" width="18" height="18"/></g>
<ellipse cx="1594" cy="161" rx="8" ry="9" fill="url(#m3)"/><ellipse cx="1594" cy="161" rx="8" ry="9" fill="url(#m3b)"/>
<ellipse cx="1594" cy="181" rx="8" ry="9" fill="url(#m1)"/><ellipse cx="1614" cy="181" rx="9" ry="9" fill="#d0d0d0"/><g clip-path="url(#dc2)"><rect x="1605" y="172" width="18" height="18" filter="url(#noise)"/></g>
<ellipse cx="1594" cy="201" rx="8" ry="9" fill="url(#m2)"/><rect x="1585.500" y="192.500" width="17" height="17" fill="none" stroke="#ffa722"/>
<ellipse cx="1574" cy="221" rx="8.500" ry="8.500" fill="#fff"/>
<ellipse cx="1594" cy="241" rx="8" ry="9" fill="url(#m5)"/>
<rect x="1587" y="295" width="14" height="14" fill="#eee" stroke="#a8641a"/><path d="M1589 297h3v3h-3ZM1595 297h3v3h-3ZM1592 300h3v3h-3ZM1598 300h2v3h-2ZM1589 303h3v3h-3ZM1595 303h3v3h-3Z" fill="#111"/>
<ellipse cx="1614" cy="301" rx="8" ry="9" fill="url(#m8)"/>

<!-- right tabs -->
<rect x="1899" y="47" width="20" height="200" fill="#444"/><path d="M1899 47h17a3 3 0 0 1 3 3v47h-20Z" fill="#686868"/><rect x="1899" y="97" width="20" height="95" rx="3" fill="#474747"/><rect x="1899" y="192" width="20" height="55" rx="3" fill="#474747"/>
<text transform="translate(1905 53) rotate(90)" style="fill:#ffa722;font-size:11.500px">Oggetti</text><text transform="translate(1905 102) rotate(90)" style="fill:#8a8a8a">Content Browser</text><text transform="translate(1905 198) rotate(90)" style="fill:#8a8a8a">Struttura</text>
<rect x="1899" y="497" width="20" height="91" fill="#474747"/><path d="M1899 497h17a3 3 0 0 1 3 3v48h-20Z" fill="#686868"/>
<text transform="translate(1905 503) rotate(90)" style="fill:#ffa722;font-size:11.500px">Attributi</text><text transform="translate(1905 555) rotate(90)" style="fill:#8a8a8a">Livelli</text>

<!-- Attributes -->
<rect x="1271" y="493" width="627" height="4" fill="#424242"/>
<rect x="1271" y="497" width="627" height="22" fill="#636363"/><rect x="1271" y="519" width="627" height="2" fill="#383838"/>
<rect x="1271" y="521" width="627" height="447" fill="#505050"/>
<rect x="1277" y="502" width="12" height="12" fill="url(#dots)"/>
<text x="1297" y="512">Modo</text><text x="1340" y="512">Modifica</text><text x="1397" y="512">Dati Utente</text>
<path d="M1750 508l15-7v14Z" fill="#111"/><path d="M1785 508l-15-7v14Z" fill="none" stroke="#777"/><path d="M1802 498l7 19h-14Z" fill="none" stroke="#777"/><use href="#ms" x="1829" y="508"/><path d="M1847 505h12v11h-12ZM1849 505v-3a4 4 0 0 1 8 0" fill="none" stroke="#111" stroke-width="1.300"/><circle cx="1870" cy="509" r="6.500" fill="none" stroke="#111" stroke-width="1.400"/><circle cx="1870" cy="509" r="3" fill="none" stroke="#111" stroke-width="1.400"/><rect x="1884" y="502" width="11" height="14" fill="none" stroke="#222"/><path d="M1884 504h11" stroke="#111" stroke-width="2"/><path d="M1886 510h7M1889.500 507v7" stroke="#222"/>
<!-- visuale -->
<rect x="1275" y="526" width="17" height="18" rx="1" fill="#e0562a"/><rect x="1275" y="526" width="17" height="3" fill="#222"/><rect x="1275" y="529" width="17" height="4" fill="#eee"/><path d="M1275 537h17M1275 540.500h17M1279 533v11M1283.500 533v11M1288 533v11" stroke="#222" stroke-width=".8"/>
<text x="1299" y="538" class="h">Visuale [Prospettiva]</text>
<!-- tabs -->
<g stroke="#343434"><rect x="1274" y="548" width="79" height="17" rx="2" fill="#87a5cf"/><rect x="1353" y="548" width="80" height="17" fill="#686868"/><rect x="1433" y="548" width="80" height="17" fill="#686868"/><rect x="1513" y="548" width="80" height="17" fill="#686868"/><rect x="1593" y="548" width="80" height="17" fill="#686868"/><rect x="1673" y="548" width="80" height="17" rx="2" fill="#686868"/></g>
<g text-anchor="middle"><text x="1313" y="561" style="fill:#111">Mostra</text><text x="1392" y="561" class="h">Filtro</text><text x="1473" y="561" class="h">Vista</text><text x="1553" y="561" class="h">Sfondo</text><text x="1633" y="561" class="h">HUD</text><text x="1713" y="561" class="h">Stereoscopico</text></g>
<rect x="1273" y="571" width="621" height="16" fill="#363636"/><text x="1275" y="583" class="b" style="fill:#a8a8a8">Mostra</text>
<text x="1287" y="605">Titolo</text><rect x="1320" y="592" width="571" height="18" rx="2" fill="#363636"/><text x="1325" y="605">Prospettiva</text>
<rect x="1273" y="614" width="621" height="16" fill="#686868"/><path d="M1284 621h7l-3.500 4Z" fill="#ddd"/><text x="1293" y="626" class="h">Oggetto Attivo</text>
<text x="1295" y="646">Ombreggiato</text><rect x="1365" y="634" width="162" height="16" rx="3" fill="url(#dd)" stroke="#363636"/><text x="1372" y="645" class="h">Gouraud Shading</text><path d="M1514 640h8l-4 4Z" fill="#ddd"/>
<text x="1295" y="665">Linea . . . . . . . .</text><rect x="1365" y="653" width="162" height="16" rx="3" fill="url(#dd)" stroke="#363636"/><text x="1372" y="664" class="h">Fil di Ferro</text><path d="M1514 659h8l-4 4Z" fill="#ddd"/>
<text x="1295" y="684">Mostra i Tag . . . . . . . . . .</text><use href="#cb1" x="1413" y="680"/><text x="1456" y="684">Raggi X . . . . . . . . . .</text><use href="#cb0" x="1552" y="680"/>
<text x="1295" y="703" class="b">Normali</text><text x="1341" y="703">. . . . . . . . . . . . .</text><use href="#cb0" x="1413" y="699"/><text x="1456" y="703" class="b d">Solo Selezionato</text><use href="#cbd" x="1552" y="699"/>
<text x="1295" y="722">Percorso Animazione</text><use href="#cb1" x="1413" y="718"/><text x="1456" y="722" class="b">Editing Isoline</text><text x="1537" y="722">. .</text><use href="#cb1" x="1552" y="718"/>
<text x="1295" y="741" class="b">Editing Deformato</text><text x="1400" y="741">. .</text><use href="#cb0" x="1413" y="737"/><text x="1456" y="741" class="b">Punti Lato</text><text x="1514" y="741">. . . . . . .</text><use href="#cb0" x="1552" y="737"/>
<text x="1295" y="760" class="b">Bande Rotazione</text><text x="1394" y="760">. . .</text><use href="#cb1" x="1413" y="756"/><text x="1456" y="760">Usa Colore Livello</text><use href="#cb0" x="1552" y="756"/>
<text x="1295" y="779" class="b d">Sel.: Box Delimitante</text><use href="#cbd" x="1413" y="775"/><text x="1456" y="779" class="b d">Includi Figli</text><text x="1519" y="779" class="d">. . . . . .</text><use href="#cb0" x="1552" y="775" opacity=".6"/>
<text x="1295" y="798" class="b">Sel.: Fil di Ferro</text><text x="1383" y="798">. . . . . .</text><use href="#cb0" x="1413" y="794"/><text x="1456" y="798" class="b">Includi Figli</text><text x="1519" y="798">. . . . . .</text><use href="#cb1" x="1552" y="794"/>
<text x="1295" y="817" class="b">Contorno</text><text x="1352" y="817">. . . . . . . . . . .</text><use href="#cb1" x="1413" y="813"/>
<rect x="1273" y="829" width="621" height="16" fill="#686868"/><path d="M1284 836h7l-3.500 4Z" fill="#ddd"/><text x="1293" y="841" class="h">Oggetto Inattivo</text>
<rect x="1273" y="845" width="621" height="82" fill="#4c4c4c"/>
<text x="1295" y="861">Settaggi Separati</text><rect x="1384" y="851" width="12" height="13" rx="3" fill="#a0a0a0" stroke="#3a3a3a"/>
<text x="1295" y="880" class="d">Ombreggiato . . . .</text><rect x="1385" y="868" width="161" height="16" rx="3" fill="url(#ddd)" stroke="#404040"/><text x="1392" y="879" class="d">Gouraud Shading</text><path d="M1534 874h8l-4 4Z" fill="#777"/>
<text x="1295" y="899" class="d">Linea . . . . . . . . . . .</text><rect x="1385" y="887" width="161" height="16" rx="3" fill="url(#ddd)" stroke="#404040"/><text x="1392" y="898" class="d">Fil di Ferro</text><path d="M1534 893h8l-4 4Z" fill="#777"/>
<text x="1295" y="918" class="d">Mostra i Tag . . . . .</text><use href="#cbd" x="1384" y="914"/>
<rect x="1899" y="588" width="20" height="380" fill="#4a4a4a"/>
</svg>
</body></html>
